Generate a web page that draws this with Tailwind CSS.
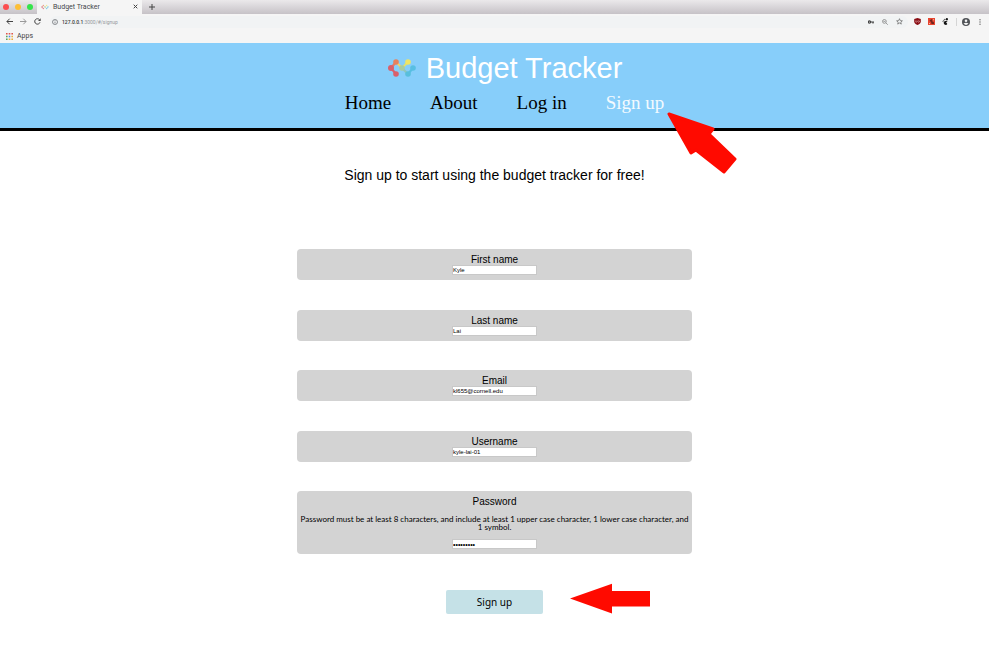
<!DOCTYPE html>
<html lang="en">
<head>
<meta charset="utf-8">
<title>Budget Tracker</title>
<script src="https://cdn.jsdelivr.net/npm/@tailwindcss/browser@4"></script>
</head>
<body class="relative min-h-screen overflow-x-hidden bg-white font-['Liberation_Sans',sans-serif] text-black">
<svg class="hidden" aria-hidden="true">
  <symbol id="logo" viewBox="0 0 30 20">
    <g stroke-width="2.2" fill="none" stroke-linecap="round">
      <path d="M9 4 4 10" stroke="#e27a6a"/><path d="M4 10 9 16" stroke="#d9606c"/>
      <path d="M9 4 15 10" stroke="#efd070"/><path d="M15 10 21 4" stroke="#e3e06e"/>
      <path d="M15 10 21 16" stroke="#8cc6bd"/><path d="M21 16 26 10" stroke="#58bfe2"/>
    </g>
    <circle cx="9" cy="4" r="2.8" fill="#e8815c"/><circle cx="4" cy="10" r="3" fill="#d9606c"/><circle cx="9" cy="16" r="2.8" fill="#d9606c"/>
    <circle cx="15" cy="10" r="2.8" fill="#a9cba0"/><circle cx="21" cy="4" r="2.8" fill="#efe565"/><circle cx="21" cy="16" r="2.8" fill="#58bfdc"/><circle cx="26" cy="10" r="2.8" fill="#58bfe2"/>
  </symbol>
</svg>

<div class="bg-[#f5f5f5] font-[Roboto,sans-serif] text-[#5f6368]">
  <div class="flex h-[14px] items-stretch bg-linear-to-b from-[#ebe9eb] to-[#c6c2c7]">
    <div class="flex w-[37px] items-center gap-[6px] pl-[3px] pb-[1px]">
      <span class="size-[6px] rounded-full bg-[#fc4e50]"></span>
      <span class="size-[6px] rounded-full bg-[#fdbf36]"></span>
      <span class="size-[6px] rounded-full bg-[#35e44b]"></span>
    </div>
    <div class="flex w-[105px] items-center bg-[#f5f5f5] pl-[4px] pr-[4px] pb-[1px] text-[7px] leading-[8px]">
      <svg class="h-[6px] w-[8px] opacity-70"><use href="#logo"/></svg>
      <span class="ml-[4px] flex-1 text-[#45484c]">Budget Tracker</span>
      <button aria-label="Close tab" class="size-[5px]"><svg class="block" viewBox="0 0 5 5" stroke="#444"><path d="m.7.7 3.6 3.6m0-3.6L.7 4.3"/></svg></button>
    </div>
    <button aria-label="New tab" class="ml-[7px]"><svg class="size-[6px]" viewBox="0 0 6 6" stroke="#444"><path d="M3 0v6M0 3h6"/></svg></button>
  </div>
  <div class="flex h-[15px] items-center pl-[6px] pr-[6px]">
    <div class="flex w-[44px] items-center gap-[7px]">
      <button aria-label="Back"><svg class="size-[7px]" viewBox="0 0 7 7" fill="none" stroke="#444"><path d="M7 3.5H1M3.7.7.9 3.5l2.8 2.8"/></svg></button>
      <button aria-label="Forward"><svg class="size-[7px]" viewBox="0 0 7 7" fill="none" stroke="#999"><path d="M0 3.5h6M3.3.7l2.8 2.8-2.8 2.8"/></svg></button>
      <button aria-label="Reload"><svg class="size-[7px]" viewBox="0 0 7 7" fill="none" stroke="#444" stroke-width="1"><path d="M6 4.3A2.7 2.7 0 1 1 5.5 1.7"/><path d="M4 2.9h2.7V.2z" fill="#444" stroke="none"/></svg></button>
    </div>
    <div class="flex h-[12px] flex-1 items-center rounded-full bg-[#f1f3f4] pl-[2px] pr-[5px]">
      <svg class="mr-[4px] size-[6px]" viewBox="0 0 6 6" fill="none" stroke="#5f6368" stroke-width=".7"><circle cx="3" cy="3" r="2.5"/><path d="M3 2.7v1.7M3 1.4v.7"/></svg>
      <a href="#/signup" class="flex-1 text-[5px] leading-[8px] text-[#96999c]"><span class="font-medium text-[#333]">127.0.0.1</span>:3000/#/signup</a>
      <div class="flex items-center gap-[8px]">
        <svg class="h-[6px] w-[6px]" viewBox="0 0 6 6" fill="none" stroke="#444"><circle cx="1.5" cy="3" r="1.1" stroke-width="1.2"/><path d="M2.5 3H6M5 3v1.5" stroke-width="1.2"/></svg>
        <svg class="size-[6px]" viewBox="0 0 6 6" fill="none" stroke="#777" stroke-width=".7"><circle cx="2.4" cy="2.4" r="1.9"/><path d="m3.8 3.8 2 2M1.4 2.4h2"/></svg>
        <svg class="size-[7px]" viewBox="0 0 7 7" fill="none" stroke="#666" stroke-width=".7"><path d="m3.5.7.8 1.9 2.1.2-1.6 1.3.5 2-1.8-1.1-1.8 1.1.5-2L.6 2.8l2.1-.2z"/></svg>
      </div>
    </div>
    <div class="ml-[6px] flex items-center gap-[7px]">
      <svg class="size-[7px]" viewBox="0 0 7 7"><path d="M3.5 0 6.8 1v2.5C6.8 5.4 5 6.5 3.5 7 2 6.5.2 5.4.2 3.5V1z" fill="#8a0d14"/><path d="M1.7 2.5v1.2q0 .6.6.6t.6-.6V2.5M4.6 2.7a.8.8 0 1 0 .1 0" fill="none" stroke="#e6c5c7" stroke-width=".5"/></svg>
      <svg class="size-[7px]" viewBox="0 0 7 7"><path fill="#e8452f" d="M0 0h7v7H0z"/><path d="M1.5 2.5 3.5 1l1 1-.5 1 2 1.5V6H3.5L3 4z" fill="#74251d"/><path d="M5 1.2h1v1H5zM1 5h1v1H1z" fill="#f6b6a8"/></svg>
      <svg class="size-[7px]" viewBox="0 0 7 7" fill="#151515"><ellipse cx="4.9" cy="1.2" rx="1.1" ry="1.1"/><circle cx="2.9" cy="1.4" r=".6"/><circle cx="1.8" cy="2.2" r=".5"/><circle cx="1" cy="3.2" r=".5"/><path d="M5.4 2.7C3 2.5 1.5 3.5 1.7 5c.2 1.7 2.3 2.6 3.3 1.5.7-.9-.5-1.2-.8-1.9-.3-.8 1.6-.9 1.2-1.9"/></svg>
      <span class="h-[8px] w-px bg-[#d5d5d5]"></span>
      <svg class="-ml-[2px] size-[8px]" viewBox="0 0 8 8"><circle cx="4" cy="4" r="4" fill="#505357"/><circle cx="4" cy="2.8" r="1.3" fill="#f5f5f5"/><path d="M1.5 5.6Q4 3.8 6.500 5.600 4 8.400 1.500 5.600" fill="#f5f5f5"/></svg>
      <svg class="h-[6px] w-[6px]" viewBox="0 0 6 6" fill="#666"><circle cx="3" cy=".8" r=".7"/><circle cx="3" cy="3" r=".7"/><circle cx="3" cy="5.2" r=".7"/></svg>
    </div>
  </div>
  <div class="flex h-[14px] items-center gap-[4px] pl-[6px] text-[7px] leading-[8px] text-[#444]">
    <svg class="size-[7px]" viewBox="0 0 7 7"><path fill="#df564b" d="M0 0h1.6v1.6H0zM2.7 0h1.6v1.6H2.7zM5.4 0H7v1.6H5.4z"/><path fill="#56a45d" d="M0 2.7h1.6v1.6H0z"/><path fill="#4f8bef" d="M2.7 2.7h1.6v1.6H2.7z"/><path fill="#e9ae3c" d="M5.4 2.7H7v1.6H5.4zM2.7 5.4h1.6V7H2.7zM5.4 5.4H7V7H5.4z"/><path fill="#56a45d" d="M0 5.4h1.6V7H0z"/></svg>
    <a href="#apps">Apps</a>
  </div>
</div>

<header class="flex flex-col items-center border-b-3 border-black bg-[#87cefa] pt-[8px] pb-[13px] pl-[20px]">
  <h1 class="flex items-center gap-[9px] text-[29px] leading-[34px] text-white">
    <svg class="h-[20px] w-[30px]" role="img" aria-label="Logo"><use href="#logo"/></svg>Budget Tracker
  </h1>
  <nav class="mt-[6px] flex gap-[39px] font-['Liberation_Serif',serif] text-[19px] leading-[24px]">
    <a href="#/">Home</a><a href="#/about">About</a><a href="#/login">Log in</a><a href="#/signup" class="text-[#f3faff]">Sign up</a>
  </nav>
</header>

<main class="flex flex-col items-center pt-[35px]">
  <h2 class="text-[14px] leading-[18px]">Sign up to start using the budget tracker for free!</h2>
  <form class="mt-[65px] flex w-2/5 flex-col items-center text-[10px] leading-[11px]">
    <div class="flex min-h-[305px] w-full flex-col justify-between">
      <div class="flex flex-col items-center rounded-[4px] bg-[#d3d3d3] pt-[5px] pb-[5px]">
        <label for="first">First name</label>
        <input id="first" value="Kyle" class="h-[10px] w-[85px] border border-[#c8c8c8] bg-white text-[6px] leading-[8px]">
      </div>
      <div class="flex flex-col items-center rounded-[4px] bg-[#d3d3d3] pt-[5px] pb-[5px]">
        <label for="last">Last name</label>
        <input id="last" value="Lai" class="h-[10px] w-[85px] border border-[#c8c8c8] bg-white text-[6px] leading-[8px]">
      </div>
      <div class="flex flex-col items-center rounded-[4px] bg-[#d3d3d3] pt-[5px] pb-[5px]">
        <label for="email">Email</label>
        <input id="email" type="email" value="kl655@cornell.edu" class="h-[10px] w-[85px] border border-[#c8c8c8] bg-white text-[6px] leading-[8px]">
      </div>
      <div class="flex flex-col items-center rounded-[4px] bg-[#d3d3d3] pt-[5px] pb-[5px]">
        <label for="user">Username</label>
        <input id="user" value="kyle-lai-01" class="h-[10px] w-[85px] border border-[#c8c8c8] bg-white text-[6px] leading-[8px]">
      </div>
      <div class="flex flex-col items-center rounded-[4px] bg-[#d3d3d3] px-[2px] pt-[5px] pb-[5px]">
        <label for="pass">Password</label>
        <p id="hint" class="my-[8px] text-center font-[Lato,sans-serif] text-[8px] leading-[8px]">Password must be at least 8 characters, and include at least 1 upper case character, 1 lower case character, and 1&nbsp;symbol.</p>
        <input id="pass" type="password" value="abcdefgh!" aria-describedby="hint" class="h-[10px] w-[85px] border border-[#c8c8c8] bg-white text-[7px] leading-[8px]">
      </div>
    </div>
    <button type="submit" class="mt-[36px] mb-[32px] rounded-[2px] bg-[#c5e1e7] px-[31px] py-[5px] font-['Noto_Sans',sans-serif] text-[10px] leading-[14px]">Sign up</button>
  </form>
</main>

<svg class="absolute top-[112px] left-1/2 ml-[172px] h-[64px] w-[72px]" viewBox="0 0 72 64" aria-hidden="true"><path d="M2 2 46 17 42 22 68 47 57 60 29 38 24 41Z" fill="#ff0a00" stroke="#ff0a00" stroke-width="3" stroke-linejoin="round"/></svg>
<svg class="absolute top-[583px] left-1/2 ml-[75px] h-[31px] w-[80px]" viewBox="0 0 80 31" aria-hidden="true"><path d="M0 15.5 42 .8V8H80V23.5H42V30.500Z" fill="#ff0a00"/></svg>
</body>
</html>
